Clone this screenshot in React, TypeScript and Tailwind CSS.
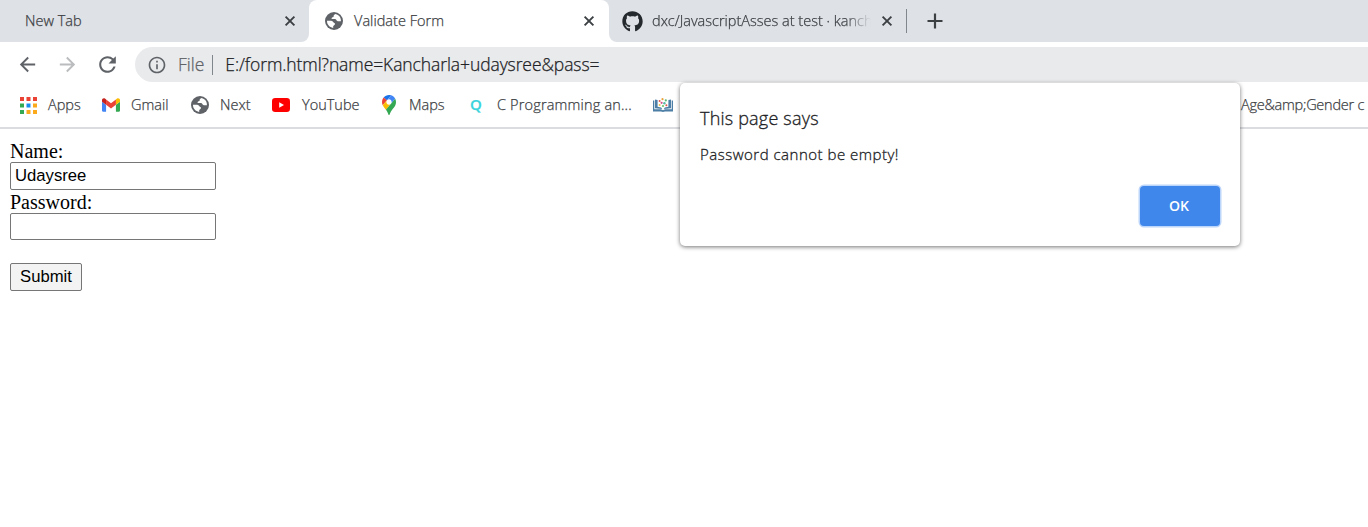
import React from "react";
import { MdArrowBack, MdArrowForward, MdInfoOutline, MdRefresh } from "react-icons/md";
import { FaGithub } from "react-icons/fa";

function CloseIcon({ className = "" }: { className?: string }) {
  return (
    <svg viewBox="0 0 16 16" className={`h-4 w-4 shrink-0 ${className}`}>
      <path d="M3.6 3.6l8.8 8.8M12.4 3.6l-8.8 8.8" stroke="#3c4043" strokeWidth="1.9" fill="none" />
    </svg>
  );
}

function PlusIcon({ className = "" }: { className?: string }) {
  return (
    <svg viewBox="0 0 22 22" className={`h-[22px] w-[22px] shrink-0 ${className}`}>
      <path d="M11 3.5v15M3.5 11h15" stroke="#3c4043" strokeWidth="2.2" fill="none" />
    </svg>
  );
}

function Globe({ className = "" }: { className?: string }) {
  return (
    <svg viewBox="0 0 18 18" className={`h-[18px] w-[18px] shrink-0 ${className}`}>
      <circle cx="9" cy="9" r="9" fill="#5f6368" />
      <path
        d="M10.6 2.1 C9 2.6 8.3 3.7 8.6 4.9 C7 5.1 6.2 6 6.7 7.1 H10.2 C11.6 7.3 11.4 9.2 12.8 9.3 H15.9 C16.2 5.6 14 2.9 10.6 2.1Z M2 8.8 H6.2 C8.4 8.9 8.2 11 9.8 11.2 C10.6 12.6 9 13.2 8.2 14 V15.9 C4.6 15.5 1.9 12.7 2 8.8Z"
        fill="#fff"
      />
    </svg>
  );
}

const appColors = [
  "#ea4335", "#ea4335", "#ea4335",
  "#34a853", "#1a8cf0", "#fbaa1c",
  "#34a853", "#fbaa1c", "#fbaa1c",
];

function AppsIcon() {
  return (
    <svg viewBox="0 0 17 17" className="h-[17px] w-[17px] shrink-0">
      {appColors.map((c, i) => (
        <rect key={i} x={(i % 3) * 6.5} y={Math.floor(i / 3) * 6.5} width="4" height="4" fill={c} />
      ))}
    </svg>
  );
}

function GmailIcon() {
  return (
    <svg viewBox="52 42 88 66" className="h-[14px] w-[18px] shrink-0">
      <path fill="#4285f4" d="M58 108h14V74L52 59v43c0 3.32 2.69 6 6 6" />
      <path fill="#34a853" d="M120 108h14c3.32 0 6-2.69 6-6V59l-20 15" />
      <path fill="#fbbc04" d="M120 48v26l20-15v-8c0-7.42-8.47-11.65-14.4-7.2" />
      <path fill="#ea4335" d="M72 74V48l24 18 24-18v26L96 92" />
      <path fill="#c5221f" d="M52 51v8l20 15V48l-5.6-4.2c-5.94-4.45-14.4-.22-14.4 7.2" />
    </svg>
  );
}

function YouTubeIcon() {
  return (
    <svg viewBox="0 0 18 14" className="h-[14px] w-[18px] shrink-0">
      <rect width="18" height="14" rx="3.2" fill="#f00" />
      <path d="M7.2 4.3 12 7l-4.8 2.7Z" fill="#fff" />
    </svg>
  );
}

function MapsIcon() {
  return (
    <svg viewBox="0 0 92.3 132.3" className="h-[20px] w-[14px] shrink-0">
      <path fill="#1a73e8" d="M60.2 2.2C55.8.8 51 0 46.1 0 32 0 19.3 6.4 10.8 16.5l21.8 18.3L60.2 2.2z" />
      <path fill="#ea4335" d="M10.8 16.5C4.1 24.5 0 34.9 0 46.1c0 8.7 1.7 15.7 4.6 22l28-33.3-21.8-18.3z" />
      <path fill="#4285f4" d="M46.2 28.5c9.8 0 17.7 7.9 17.7 17.7 0 4.3-1.6 8.3-4.2 11.4 0 0 13.9-16.6 27.5-32.7-5.6-10.8-15.3-19-27-22.7L32.6 34.8c3.3-3.8 8.1-6.3 13.6-6.3" />
      <path fill="#fbbc04" d="M46.2 63.8c-9.8 0-17.7-7.9-17.7-17.7 0-4.3 1.5-8.3 4.1-11.3l-28 33.3c4.8 10.6 12.8 19.2 21 29.9l34.1-40.5c-3.3 3.9-8.1 6.3-13.5 6.3" />
      <path fill="#34a853" d="M59.1 109.2c15.4-24.1 33.3-35 33.3-63 0-7.7-1.9-14.9-5.2-21.3L25.6 98c2.6 3.4 5.3 7.3 7.9 11.3 9.4 14.5 6.8 23.1 12.8 23.1s3.4-8.7 12.8-23.2" />
    </svg>
  );
}

function BookIcon() {
  return (
    <svg viewBox="0 0 20 14" className="h-[14px] w-[20px] shrink-0">
      <path d="M0 2.5h1.3v8.8h6.7l2 1 2-1h6.7V2.5H20v11h-8l-2 .5-2-.5H0Z" fill="#4d7fa6" />
      <path d="M2 1.6 4.6 2v6.8l3.6.8 1 1.4-7.2-.8Z M18 1.6 15.4 2v6.8l-3.6.8-1 1.4 7.2-.8Z" fill="#4d7fa6" />
      <circle cx="6.6" cy="3" r="1" fill="#e2574c" />
      <circle cx="9.5" cy="1.2" r="1.1" fill="#e9a23b" />
      <circle cx="12.8" cy="2.4" r="1.1" fill="#5bb974" />
      <circle cx="8.6" cy="4.8" r="1.1" fill="#d94f8a" />
      <circle cx="11.4" cy="5.2" r="1.2" fill="#58b9a5" />
      <circle cx="6.6" cy="7" r="1" fill="#f0c24b" />
      <circle cx="13.4" cy="7.2" r="1" fill="#e2574c" />
      <circle cx="10" cy="8" r="1.1" fill="#6ac26e" />
    </svg>
  );
}

export default function App() {
  return (
    <div className="relative h-[527px] w-[1368px] overflow-hidden bg-white font-['Open_Sans','Noto_Sans',sans-serif] text-[#3c4043]">
      <header className="[-webkit-text-stroke:0.25px]">
        <div className="flex h-[42px] text-[14.5px] font-light whitespace-nowrap">
          <div className="flex w-[309px] items-center justify-between rounded-br-lg bg-[#dee1e6] pr-[11px] pl-[25px]">
            <span>New Tab</span>
            <CloseIcon />
          </div>
          <div className="w-[300px] bg-[#dee1e6]">
            <div className="flex h-full items-center rounded-t-lg bg-white pr-[12px] pl-[16px]">
              <Globe />
              <span className="ml-[11px] flex-1 tracking-[0.02px]">Validate Form</span>
              <CloseIcon />
            </div>
          </div>
          <div className="flex flex-1 items-center rounded-bl-lg bg-[#dee1e6] pl-[13px]">
            <FaGithub className="h-[21px] w-[21px] text-[#24292e]" />
            <span className="ml-[9px] w-[219px] overflow-hidden mask-[linear-gradient(to_right,black_88%,transparent)]">
              dxc/JavascriptAsses at test · kanch
            </span>
            <CloseIcon className="ml-[8px]" />
            <div className="ml-[11px] h-6 w-px bg-[#80868b]" />
            <PlusIcon className="ml-[17px]" />
          </div>
        </div>
        <div className="flex h-[45px] items-center pl-[16px] text-[#5f6368]">
          <MdArrowBack className="h-[23px] w-[23px]" />
          <MdArrowForward className="ml-[17px] h-[23px] w-[23px] text-[#babcbe]" />
          <MdRefresh className="ml-[16px] h-[25px] w-[25px]" />
          <div className="ml-[15px] flex h-[35px] flex-1 items-center rounded-l-full bg-[#e9eaec] pl-[12px] text-[17.5px] font-light whitespace-nowrap">
            <MdInfoOutline className="h-5 w-5" />
            <span className="ml-[11px]">File</span>
            <div className="ml-[8px] h-5 w-px bg-[#80868b]" />
            <span className="ml-[12px] tracking-[-0.09px] text-[#202124]">E:/form.html?name=Kancharla+udaysree&amp;pass=</span>
          </div>
        </div>
        <nav className="flex h-[42px] items-center border-b-2 border-[#dadce0] pb-[4px] text-[14.5px] font-light whitespace-nowrap">
          <div className="flex w-[82px] shrink-0 items-center pl-[20px]"><AppsIcon /><span className="ml-[11px]">Apps</span></div>
          <div className="flex w-[89px] shrink-0 items-center pl-[20px]"><GmailIcon /><span className="ml-[11px]">Gmail</span></div>
          <div className="flex w-[81px] shrink-0 items-center pl-[20px]"><Globe /><span className="ml-[11px]">Next</span></div>
          <div className="flex w-[108px] shrink-0 items-center pl-[20px]"><YouTubeIcon /><span className="ml-[12px]">YouTube</span></div>
          <div className="flex w-[88px] shrink-0 items-center pl-[22px]"><MapsIcon /><span className="ml-[13px]">Maps</span></div>
          <div className="flex w-[205px] shrink-0 items-center pl-[22px]">
            <span className="w-[13px] pb-[2px] text-[15px] leading-[18px] font-semibold text-[#3bd3dc]">Q</span>
            <span className="ml-[14px] tracking-[0.17px]">C Programming an...</span>
          </div>
          <BookIcon />
          <span className="ml-[568px] tracking-[-0.25px]">Age&amp;amp;Gender c</span>
        </nav>
      </header>
      <main className="pt-[10px] pl-[10px] font-['Liberation_Serif',serif] text-[20px] leading-[23px] text-black">
        <form className="flex flex-col items-start" onSubmit={(e) => e.preventDefault()}>
          <label className="relative top-px">Name:</label>
          <input
            defaultValue="Udaysree"
            className="h-[28px] w-[206px] rounded-[2px] border border-[#767676] px-[4px] font-['Liberation_Sans',sans-serif] text-[16.67px]"
          />
          <label className="relative top-px">Password:</label>
          <input
            type="password"
            className="h-[27px] w-[206px] rounded-[2px] border border-[#767676] px-[4px] font-['Liberation_Sans',sans-serif] text-[16.67px]"
          />
          <button className="mt-[23px] h-[28px] w-[72px] rounded-[2px] border border-[#767676] bg-[#f3f3f3] pb-[2px] font-['Liberation_Sans',sans-serif] text-[16.67px]">
            Submit
          </button>
        </form>
      </main>
      <div
        role="alertdialog"
        className="absolute top-[83px] left-[680px] flex h-[163px] w-[560px] flex-col rounded-[5px] bg-white p-5 text-[#202124] shadow-[0_1px_4px_rgba(0,0,0,0.55)]"
      >
        <h1 className="mt-[2px] text-[18px] leading-[27px] font-light tracking-[0.2px] [-webkit-text-stroke:0.3px]">This page says</h1>
        <p className="mt-[12px] text-[15px] leading-[20px] font-light tracking-[0.5px] [-webkit-text-stroke:0.3px]">Password cannot be empty!</p>
        <button className="mt-auto h-10 w-20 self-end rounded-[4px] bg-[#3f87ea] pr-[2px] pb-[2px] text-[14px] font-semibold text-white shadow-[0_0_0_1.5px_#bcd5fa]">
          OK
        </button>
      </div>
    </div>
  );
}
